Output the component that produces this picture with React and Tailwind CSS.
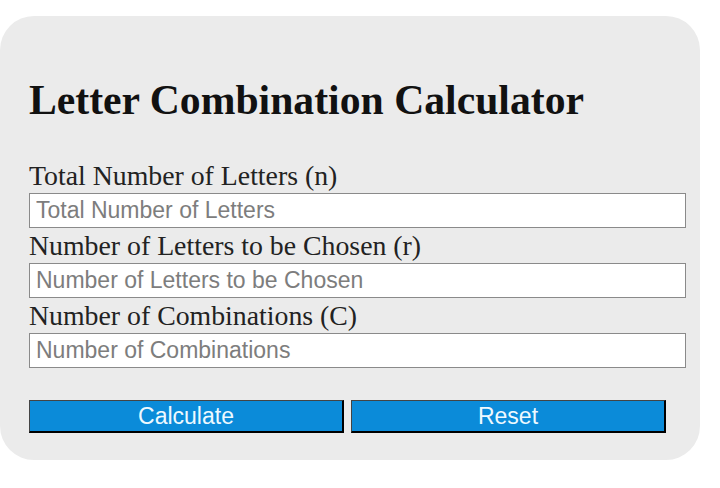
export default function App() {
  const fields = [
    { label: "Total Number of Letters (n)", placeholder: "Total Number of Letters" },
    { label: "Number of Letters to be Chosen (r)", placeholder: "Number of Letters to be Chosen" },
    { label: "Number of Combinations (C)", placeholder: "Number of Combinations" },
  ];

  return (
    <div className="min-h-[488px] bg-white pt-4">
      <div className="w-[700px] rounded-[34px] bg-[#ebebeb] pl-[29px] pr-[13px] pt-[60px] pb-[27px]">
        <h2 className="mb-[34px] text-[41.7px] font-bold leading-[48px] text-[#111] [font-family:'Liberation_Serif',serif]">
          Letter Combination Calculator
        </h2>

        {fields.map((f) => (
          <div key={f.label}>
            <div className="text-[27.8px] leading-[35px] text-[#222] [font-family:'Liberation_Serif',serif]">
              {f.label}
            </div>
            <input
              type="text"
              placeholder={f.placeholder}
              className="block h-[35px] w-[657px] border border-[#8a8a8a] bg-white px-[6px] text-[23px] text-[#333] placeholder:text-[#7d7d7d] outline-none [font-family:'Liberation_Sans',sans-serif]"
            />
          </div>
        ))}

        <div className="mt-[32px] flex gap-[7px]">
          <button className="h-[33px] w-[315px] border-t border-l border-r-2 border-b-2 border-t-[#444] border-l-[#444] border-r-black border-b-black bg-[#0b8bd9] text-[23px] leading-none text-[#eef9ff] [font-family:'Liberation_Sans',sans-serif]">
            Calculate
          </button>
          <button className="h-[33px] w-[315px] border-t border-l border-r-2 border-b-2 border-t-[#444] border-l-[#444] border-r-black border-b-black bg-[#0b8bd9] text-[23px] leading-none text-[#eef9ff] [font-family:'Liberation_Sans',sans-serif]">
            Reset
          </button>
        </div>
      </div>
    </div>
  );
}
